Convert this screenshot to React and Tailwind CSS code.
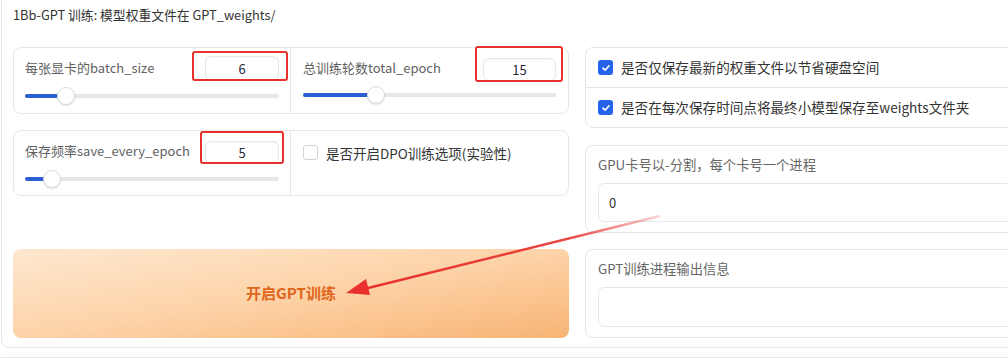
import React from 'react';

const font = { fontFamily: '"Noto Sans CJK SC", "Noto Sans", sans-serif' };

function Slider({ fill, thumb }) {
  return (
    <div className="relative h-[18px] flex items-center">
      <div className="relative w-full h-[4px] rounded-full bg-[#e5e7eb]">
        <div className="absolute left-0 top-0 h-full rounded-full bg-[#2c5fd4]" style={{ width: fill }} />
      </div>
      <div
        className="absolute top-0 w-[18px] h-[18px] rounded-full bg-white border border-[#d8dbe0] shadow-[0_1px_2px_rgba(0,0,0,0.12)]"
        style={{ left: thumb - 9 }}
      />
    </div>
  );
}

function NumBox({ value, w, h }) {
  return (
    <div
      className={`${w} ${h} flex items-center justify-center rounded-md border border-[#e5e7eb] bg-white text-[13px] text-[#1f2937] shadow-[inset_0_1px_2px_rgba(0,0,0,0.04)]`}
    >
      {value}
    </div>
  );
}

function CheckBox({ checked }) {
  if (!checked) {
    return <div className="w-[15px] h-[15px] rounded-[3px] border border-[#cfd3d9] bg-white shrink-0" />;
  }
  return (
    <div className="w-[15px] h-[15px] rounded-[3px] bg-[#2563eb] shrink-0 flex items-center justify-center">
      <svg width="10" height="10" viewBox="0 0 10 10">
        <path d="M2 5.2 L4.2 7.2 L8 2.8" fill="none" stroke="white" strokeWidth="1.7" strokeLinecap="round" strokeLinejoin="round" />
      </svg>
    </div>
  );
}

export default function App() {
  return (
    <div className="relative w-[1008px] h-[360px] overflow-hidden bg-white" style={font}>
      <div className="ml-[1px] mt-[-10px] w-[1030px] h-[358px] border border-[#e5e7eb] rounded-lg bg-white pt-[14px] pl-[11px]">
        <div className="h-[20px] leading-[20px] text-[12.8px] text-[#333]">1Bb-GPT 训练: 模型权重文件在 GPT_weights/</div>

        <div className="mt-[22px] flex gap-[16px]">
          {/* left column */}
          <div className="w-[556px] flex flex-col">
            <div className="h-[67px] grid grid-cols-2 rounded-lg border border-[#e5e7eb] bg-white">
              <div className="pl-[11px] pr-[11px] border-r border-[#e5e7eb]">
                <div className="flex justify-between items-start">
                  <div className="mt-[10px] leading-[20px] text-[13px] text-[#5f5f5f]">每张显卡的batch_size</div>
                  <div className="mt-[8px]"><NumBox value="6" w="w-[74px]" h="h-[25px]" /></div>
                </div>
                <div className="mt-[6px]"><Slider fill={33} thumb={41} /></div>
              </div>
              <div className="pl-[12px] pr-[12px]">
                <div className="flex justify-between items-start">
                  <div className="mt-[10px] leading-[20px] text-[13px] text-[#5f5f5f]">总训练轮数total_epoch</div>
                  <div className="mt-[10px]"><NumBox value="15" w="w-[73px]" h="h-[23px]" /></div>
                </div>
                <div className="mt-[5px]"><Slider fill={70} thumb={73} /></div>
              </div>
            </div>

            <div className="mt-[16px] h-[66px] grid grid-cols-2 rounded-lg border border-[#e5e7eb] bg-white">
              <div className="pl-[11px] pr-[11px] border-r border-[#e5e7eb]">
                <div className="flex justify-between items-start">
                  <div className="mt-[10px] leading-[20px] text-[13px] text-[#5f5f5f]">保存频率save_every_epoch</div>
                  <div className="mt-[10px]"><NumBox value="5" w="w-[74px]" h="h-[23px]" /></div>
                </div>
                <div className="mt-[6px]"><Slider fill={22} thumb={27} /></div>
              </div>
              <div className="pl-[12px] pt-[13px] flex items-start gap-[8px]">
                <div className="mt-[1px]"><CheckBox checked={false} /></div>
                <div className="leading-[18px] text-[13.5px] text-[#333]">是否开启DPO训练选项(实验性)</div>
              </div>
            </div>

            <div className="mt-[53px] h-[89px] rounded-lg bg-gradient-to-br from-[#fee8d0] via-[#fdd3a8] to-[#f7b474] flex items-center justify-center">
              <span className="text-[15px] font-bold text-[#e0661c]">开启GPT训练</span>
            </div>
          </div>

          {/* right column */}
          <div className="w-[440px] flex flex-col">
            <div className="h-[81px] rounded-lg border border-[#e5e7eb] bg-white flex flex-col">
              <div className="h-[39px] flex items-center gap-[8px] pl-[12px]">
                <CheckBox checked />
                <span className="text-[13.6px] text-[#333]">是否仅保存最新的权重文件以节省硬盘空间</span>
              </div>
              <div className="h-[40px] border-t border-[#e5e7eb] flex items-center gap-[8px] pl-[12px]">
                <CheckBox checked />
                <span className="text-[13.6px] text-[#333]">是否在每次保存时间点将最终小模型保存至weights文件夹</span>
              </div>
            </div>

            <div className="mt-[17px] h-[88px] rounded-lg border border-[#e5e7eb] bg-white px-[12px]">
              <div className="mt-[9px] leading-[20px] text-[13.3px] text-[#666]">GPU卡号以-分割，每个卡号一个进程</div>
              <div className="mt-[8px] h-[39px] rounded-md border border-[#e5e7eb] bg-white flex items-center pl-[10px] text-[13px] text-[#333]">0</div>
            </div>

            <div className="mt-[16px] h-[89px] rounded-lg border border-[#e5e7eb] bg-white px-[12px]">
              <div className="mt-[9px] leading-[20px] text-[13.3px] text-[#666]">GPT训练进程输出信息</div>
              <div className="mt-[8px] h-[40px] rounded-md border border-[#e5e7eb] bg-white" />
            </div>
          </div>
        </div>
      </div>

      <div className="ml-[1px] mt-[9px] w-[1030px] h-[40px] border-t border-[#e5e7eb]" />

      {/* red annotation boxes */}
      <div className="absolute left-[192px] top-[51px] w-[96px] h-[30px] border-2 border-[#e8312c] rounded-[3px]" />
      <div className="absolute left-[475px] top-[46px] w-[88px] h-[36px] border-2 border-[#e8312c] rounded-[3px]" />
      <div className="absolute left-[200px] top-[131px] w-[84px] h-[33px] border-2 border-[#e8312c] rounded-[3px]" />

      {/* red arrow */}
      <svg className="absolute left-0 top-0 pointer-events-none" width="1008" height="360">
        <defs>
          <linearGradient id="fade" x1="350" y1="293" x2="660" y2="216" gradientUnits="userSpaceOnUse">
            <stop offset="0" stopColor="#e8312c" stopOpacity="1" />
            <stop offset="0.7" stopColor="#e8312c" stopOpacity="0.9" />
            <stop offset="1" stopColor="#e8312c" stopOpacity="0.2" />
          </linearGradient>
        </defs>
        <line x1="360" y1="290" x2="660" y2="216" stroke="url(#fade)" strokeWidth="2.4" />
        <polygon points="346,293 366,279 370,295" fill="#e8312c" />
      </svg>
    </div>
  );
}
